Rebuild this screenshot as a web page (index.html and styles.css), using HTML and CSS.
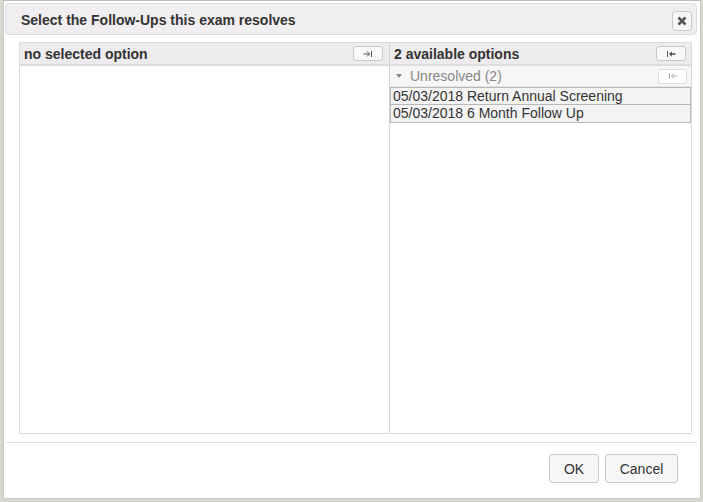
FILE: index.html
```html
<!DOCTYPE html>
<html>
<head>
<meta charset="utf-8">
<link rel="stylesheet" href="styles.css">
</head>
<body>
<div class="dialog">
  <div class="titlebar">
    <span class="title">Select the Follow-Ups this exam resolves</span>
    <button class="close" aria-label="close">
      <svg width="10" height="10" viewBox="0 0 10 10"><path d="M1.5 1.5 L8.5 8.5 M8.5 1.5 L1.5 8.5" stroke="#555" stroke-width="2.6" stroke-linecap="butt"/></svg>
    </button>
  </div>
  <div class="content">
    <div class="panel left">
      <div class="phead">
        <span class="ptitle">no selected option</span>
        <button class="mini">
          <svg width="10" height="8" viewBox="0 0 10 8"><path d="M0.5 4 H6.5 M4 1.5 L6.5 4 L4 6.5" stroke="#555" stroke-width="1" fill="none"/><path d="M8.5 1 V7" stroke="#555" stroke-width="1"/></svg>
        </button>
      </div>
      <div class="pbody"></div>
    </div>
    <div class="panel right">
      <div class="phead">
        <span class="ptitle">2 available options</span>
        <button class="mini">
          <svg width="10" height="8" viewBox="0 0 10 8"><path d="M1.5 1 V7" stroke="#555" stroke-width="1"/><path d="M3 4 L6 1.2 V6.8 Z" fill="#555"/><path d="M5 4 H9.5" stroke="#555" stroke-width="1.6"/></svg>
        </button>
      </div>
      <div class="pbody">
        <div class="group">
          <span class="caret"></span>
          <span class="gtitle">Unresolved (2)</span>
          <button class="mini faded">
            <svg width="10" height="8" viewBox="0 0 10 8"><path d="M1.5 1 V7" stroke="#aaa" stroke-width="1"/><path d="M3.5 4 H9.5 M6 1.5 L3.5 4 L6 6.5" stroke="#aaa" stroke-width="1" fill="none"/></svg>
          </button>
        </div>
        <div class="opt">05/03/2018 Return Annual Screening</div>
        <div class="opt">05/03/2018 6 Month Follow Up</div>
      </div>
    </div>
  </div>
  <div class="footer">
    <button class="btn ok">OK</button>
    <button class="btn cancel">Cancel</button>
  </div>
</div>
</body>
</html>
```
FILE: styles.css
```css
html, body {
  margin: 0;
  padding: 0;
}
body {
  width: 703px;
  height: 502px;
  background: #d7d7cf;
  font-family: "Liberation Sans", Arial, sans-serif;
  color: #333;
  overflow: hidden;
}
.dialog {
  box-sizing: border-box;
  margin-left: 3px;
  width: 698px;
  height: 499px;
  background: #fff;
  border: 1px solid #c8c8c8;
  border-top-color: #bbb;
  padding: 2px 3px 0 1px;
  display: flex;
  flex-direction: column;
}
.titlebar {
  box-sizing: border-box;
  height: 32px;
  background: #f1eef1;
  border: 1px solid #dedbde;
  border-radius: 4px;
  display: flex;
  align-items: center;
  justify-content: space-between;
  padding: 0 4px 0 15px;
}
.title {
  font-weight: bold;
  font-size: 14px;
  color: #333;
  padding-top: 1px;
}
.close {
  box-sizing: border-box;
  width: 20px;
  height: 20px;
  border: 1px solid #c9c9c9;
  border-radius: 3px;
  background: #f6f6f6;
  padding: 0;
  display: flex;
  align-items: center;
  justify-content: center;
  margin-top: 3px;
}
.content {
  display: flex;
  margin: 7px 5px 0 14px;
  height: 392px;
}
.panel {
  box-sizing: border-box;
  border: 1px solid #dcdcdc;
  display: flex;
  flex-direction: column;
}
.panel.left {
  width: 371px;
  border-right: 1px solid #d4d4d4;
}
.panel.right {
  width: 302px;
  border-left: none;
}
.phead {
  box-sizing: border-box;
  height: 23px;
  background: #eeebee;
  border-bottom: 2px solid #dedede;
  display: flex;
  align-items: center;
  justify-content: space-between;
  padding: 0 6px 0 4px;
}
.right .phead {
  padding-right: 5px;
}
.ptitle {
  font-weight: bold;
  font-size: 14px;
  color: #333;
}
.mini {
  box-sizing: border-box;
  width: 30px;
  height: 15px;
  border: 1px solid #c9c9c9;
  border-radius: 3px;
  background: #f8f8f8;
  padding: 0;
  display: flex;
  align-items: center;
  justify-content: center;
}
.mini.faded {
  border-color: #dcdcdc;
  background: #fff;
  width: 29px;
}
.pbody {
  flex: 1;
  background: #fff;
}
.group {
  box-sizing: border-box;
  height: 21px;
  background: #f7f5f7;
  display: flex;
  align-items: center;
  padding: 0 4px 0 6px;
  border-bottom: 1px solid #e4e4e4;
}
.caret {
  width: 0;
  height: 0;
  border-left: 3.5px solid transparent;
  border-right: 3.5px solid transparent;
  border-top: 4px solid #888;
  margin-right: 8px;
}
.gtitle {
  flex: 1;
  font-size: 14px;
  color: #888;
}
.opt {
  box-sizing: border-box;
  height: 18px;
  line-height: 16px;
  background: #f3f3f3;
  border: 1px solid #b8b8b8;
  font-size: 14px;
  color: #333;
  padding-left: 2px;
  white-space: nowrap;
}
.opt + .opt {
  border-top: none;
  line-height: 17px;
}
.footer {
  margin-top: 8px;
  border-top: 1px solid #dcdcdc;
  display: flex;
  justify-content: flex-end;
  gap: 6px;
  padding: 11px 19px 0 0;
  margin-left: 1px;
}
.btn {
  box-sizing: border-box;
  height: 29px;
  border: 1px solid #c9c9c9;
  border-radius: 3px;
  background: #f6f6f6;
  font-family: "Liberation Sans", Arial, sans-serif;
  font-size: 14px;
  color: #333;
  padding: 0;
}
.btn.ok { width: 50px; }
.btn.cancel { width: 73px; }
```
